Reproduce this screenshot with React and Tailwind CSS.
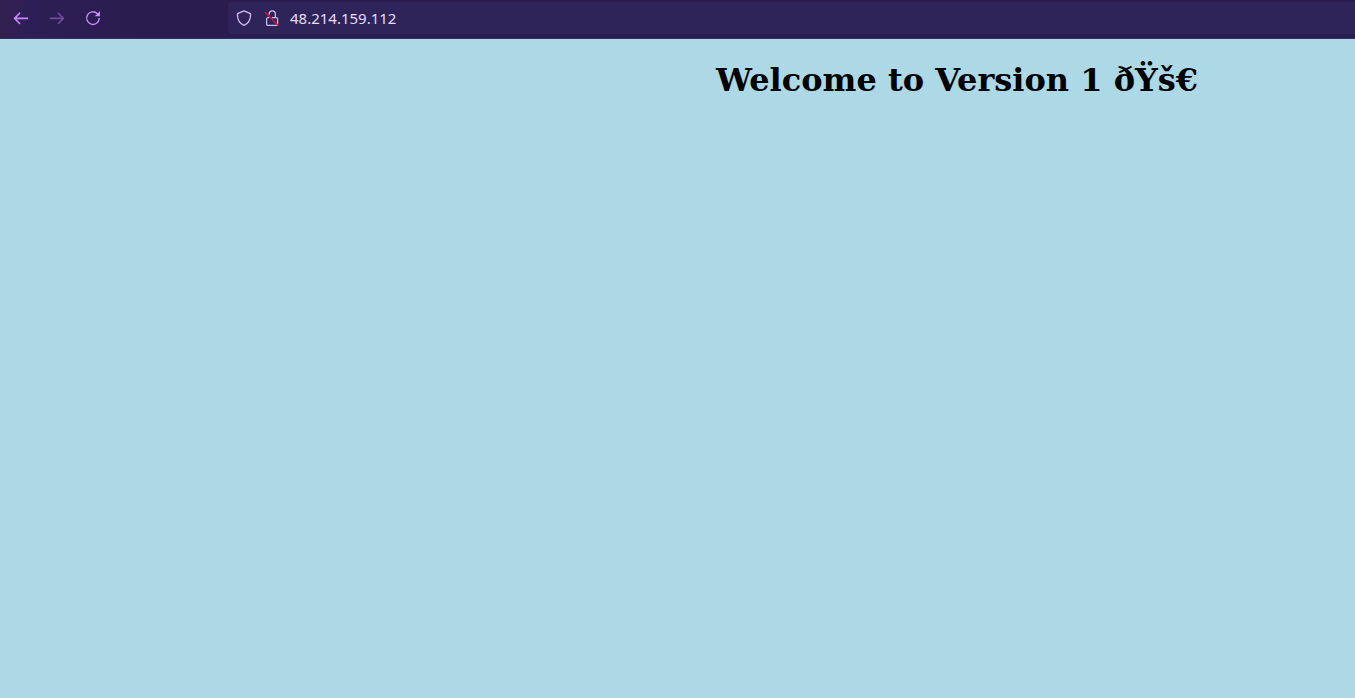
import React from "react";

function Icon({ children }) {
  return (
    <svg
      viewBox="0 0 16 16"
      className="size-4 shrink-0"
      fill="none"
      stroke="currentColor"
      strokeWidth="1.4"
      strokeLinecap="round"
      strokeLinejoin="round"
      aria-hidden="true"
    >
      {children}
    </svg>
  );
}

function NavButton({ label, disabled, children }) {
  return (
    <button
      type="button"
      aria-label={label}
      disabled={disabled}
      className="flex h-8 w-9 items-center justify-center text-[#c689ff] disabled:text-[#704a9e]"
    >
      <Icon>{children}</Icon>
    </button>
  );
}

function Toolbar() {
  return (
    <header className="flex h-[39px] items-start border-b border-[#3b2a6b] bg-[#2a1c4e] bg-linear-to-r from-[#33204f] from-0% via-[#2d1f55] via-2% to-[#2a1c4e] to-10% pt-0.5">
      <nav className="flex w-[228px] shrink-0 pl-[3px]">
        <NavButton label="Back">
          <path d="M14.5 8.4H2M6.6 3.2 1.6 8.4l5 5.1" strokeWidth="1.6" />
        </NavButton>
        <NavButton label="Forward" disabled>
          <path d="M1.5 8.4H14M9.4 3.2l5 5.2-5 5.1" strokeWidth="1.6" />
        </NavButton>
        <NavButton label="Reload">
          <path d="M12.4 3.7A6.3 6.3 0 1 0 14.2 8.4" />
          <path d="M15 1v5.3H9.7z" fill="currentColor" stroke="none" />
        </NavButton>
      </nav>
      <form
        className="flex h-8 min-w-0 flex-1 items-center rounded-l bg-[#2e245a] pl-2 text-[#cdbfee]"
        onSubmit={(e) => e.preventDefault()}
      >
        <Icon>
          <path
            d="M8 .9 13.9 3.3c.5.2.7.5.7.9 0 5.2-2.2 9.3-6.6 11.1C3.6 13.5 1.4 9.4 1.4 4.2c0-.4.2-.7.7-.9z"
            strokeWidth="1.3"
          />
        </Icon>
        <span className="w-3 shrink-0" />
        <Icon>
          <path
            d="M5.2 4.2C5.3 2 6.4.8 8.2.8c2 0 3.2 1.4 3.2 3.4v3.1M5 7.5h-.8C3.2 7.5 2.6 8 2.6 9v5c0 .9.5 1.4 1.4 1.4h8.2c.9 0 1.4-.5 1.4-1.4V9c0-1-.6-1.5-1.5-1.5H8.4"
            strokeWidth="1.25"
          />
          <path d="m1.4 2.6 12.8 12.8" stroke="#e2103f" />
        </Icon>
        <input
          type="text"
          aria-label="Address"
          defaultValue="48.214.159.112"
          spellCheck={false}
          className="ml-2.5 h-full min-w-0 flex-1 bg-transparent font-['Noto_Sans',sans-serif] text-[15px] text-[#e6dcff] outline-none"
        />
      </form>
    </header>
  );
}

export default function App() {
  return (
    <div className="flex min-h-screen flex-col bg-[#add8e6]">
      <Toolbar />
      <main className="flex-1 pt-[22px] pl-[559px]">
        <h1 className="text-center font-['DejaVu_Serif',serif] text-[32px] leading-[38px] font-bold text-black">
          Welcome to Version 1 ðŸš€
        </h1>
      </main>
    </div>
  );
}
